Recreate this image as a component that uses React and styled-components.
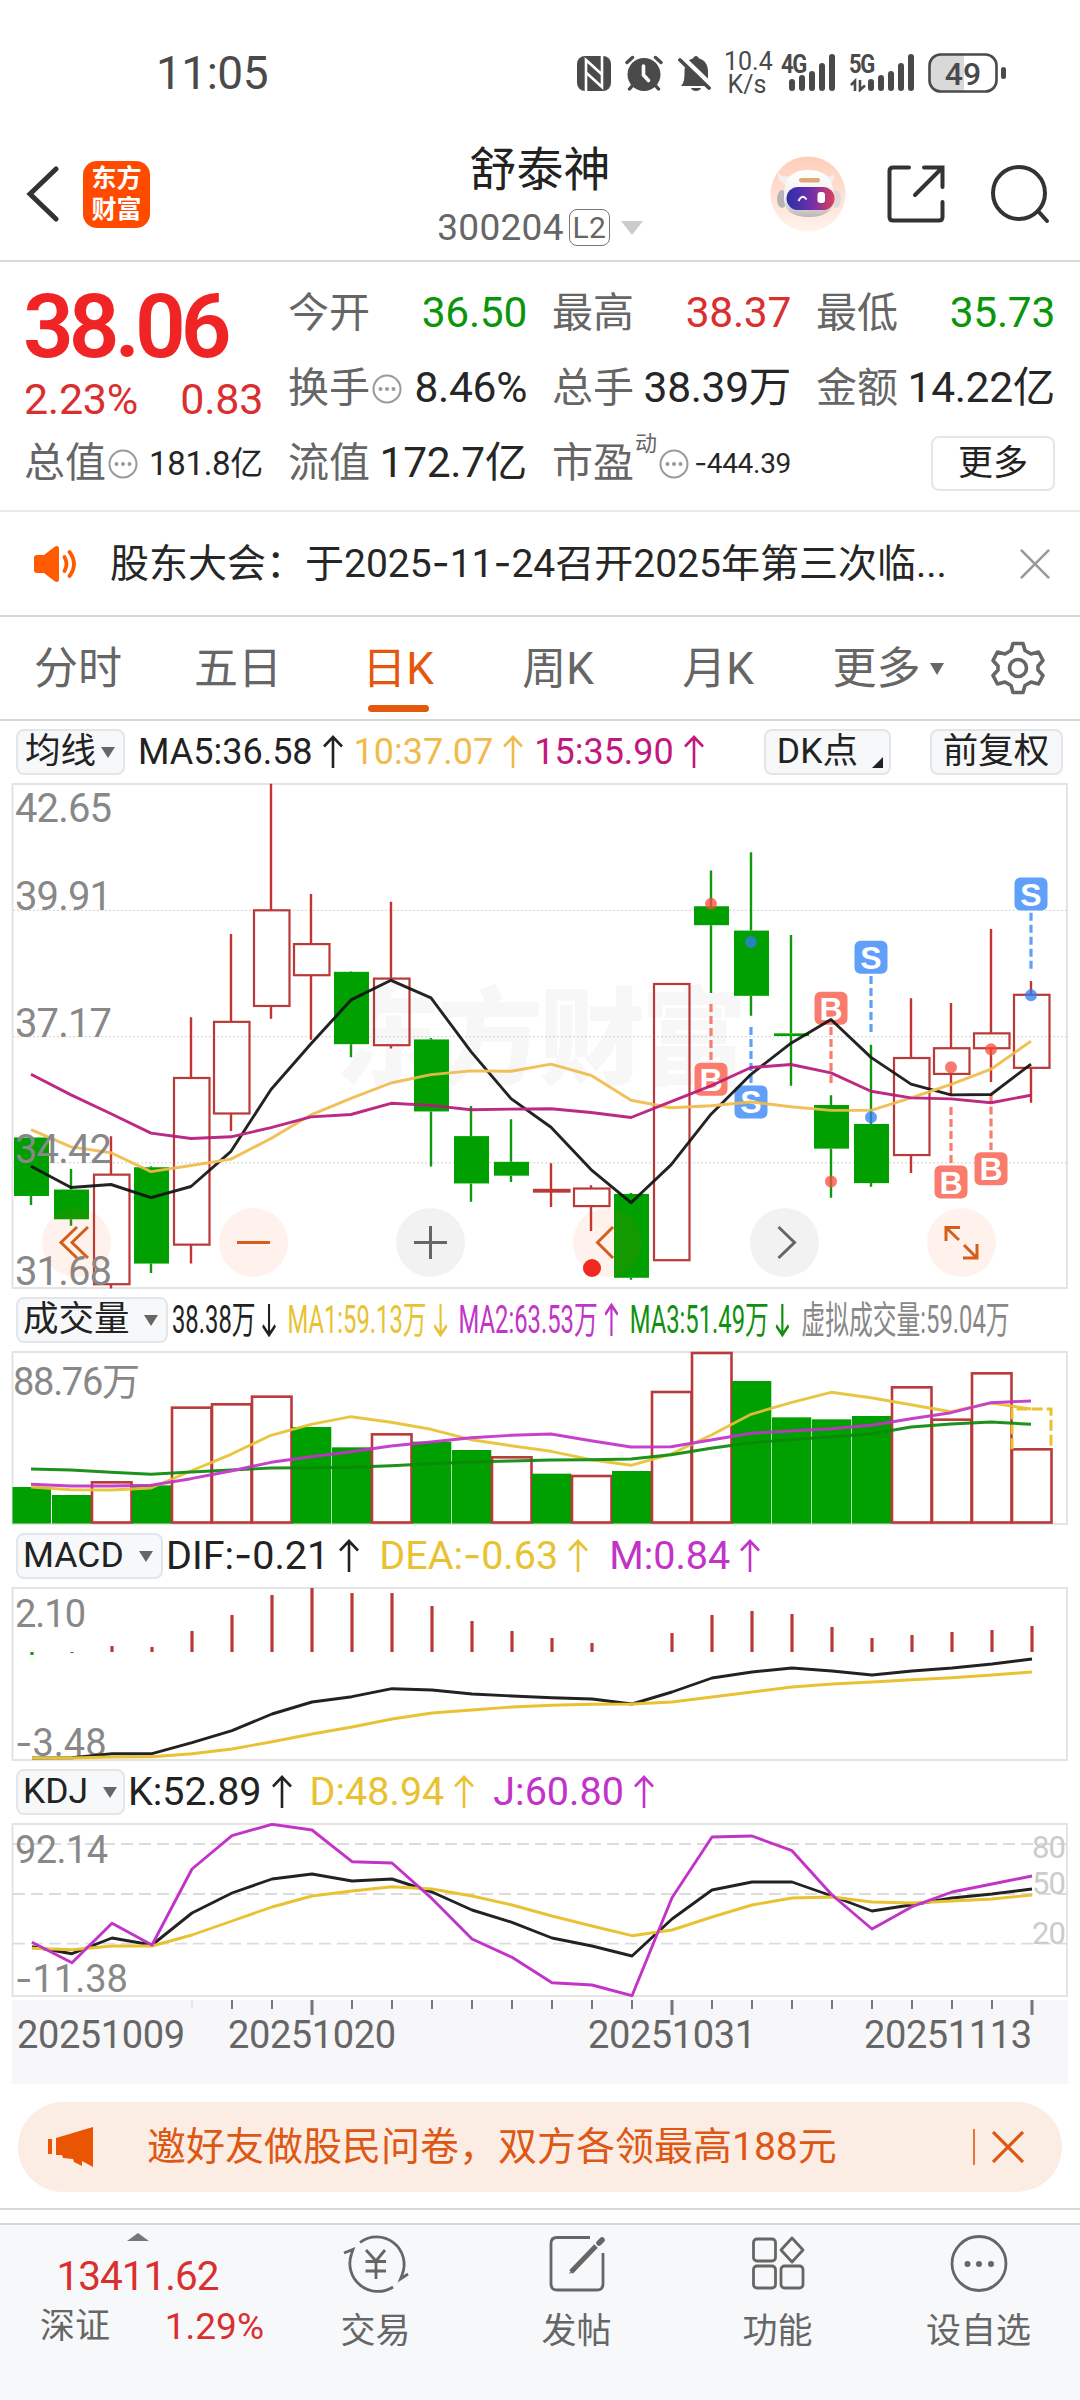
import React from 'react';
import styled, { createGlobalStyle } from 'styled-components';

const GlobalStyle = createGlobalStyle`
* {
    box-sizing: border-box;
}
body {
    margin: 0;
    background-color: #fff;
    font-family: Roboto, "Noto Sans CJK SC", sans-serif;
    color: #222;
}
`

const StyledPage = styled.div`
width: 1080px;
height: 2400px;
overflow: hidden;
background-color: #fff;
line-height: 1;
white-space: nowrap;
`

/* status bar */

const StyledStatusBar = styled.div`
display: flex;
align-items: center;
justify-content: space-between;
height: 114px;
padding: 32px 73px 0 156px;
color: #4a4a4a;
`

const StyledClock = styled.span`
font-size: 46px;
letter-spacing: -.5px;
`

const StyledStatusIcons = styled.div`
display: flex;
align-items: center;
`

const StyledSpeed = styled.div`
width: 46px;
margin: 0 11px 0 13px;
font-size: 25px;
line-height: 23px;
text-align: center;
`

const StyledSvg = styled.svg`
display: block;
flex-shrink: 0;
margin-left: ${props => props.$left || 0}px;
`

/* header */

const StyledHeader = styled.div`
display: grid;
grid-template-columns: 400px 1fr 400px;
height: 148px;
border-bottom: 2px solid #d8d8d8;
`

const StyledHeaderSide = styled.div`
display: flex;
align-items: center;
justify-content: ${props => props.$end ? 'flex-end' : 'flex-start'};
padding: 14px 30px 0 26px;
`

const StyledLogo = styled.div`
display: flex;
flex-direction: column;
align-items: center;
justify-content: center;
width: 67px;
height: 67px;
margin-left: 24px;
border-radius: 14px;
background-color: #ff4a00;
color: #fff;
font-size: 25px;
font-weight: 700;
line-height: 31px;
`

const StyledTitleBlock = styled.div`
display: flex;
flex-direction: column;
align-items: center;
padding-top: 32px;
`

const StyledTitle = styled.div`
font-size: 47px;
`

const StyledCode = styled.div`
display: flex;
align-items: center;
margin-top: 16px;
font-size: 37px;
letter-spacing: .3px;
color: #666;
`

const StyledLevel = styled.span`
display: flex;
align-items: center;
justify-content: center;
width: 41px;
height: 37px;
margin-left: 5px;
border: 1.5px solid #777;
border-radius: 8px;
font-size: 30px;
`

const StyledTriangle = styled.span`
width: 0;
height: 0;
margin-left: ${props => props.$left || 0}px;
border-left: ${props => props.$size || 7}px solid transparent;
border-right: ${props => props.$size || 7}px solid transparent;
border-top: ${props => props.$tall || 11}px solid ${props => props.$color || '#666'};
`

/* quote */

const StyledQuote = styled.div`
display: grid;
grid-template-columns: repeat(4, 239px);
grid-template-rows: repeat(3, 75px);
column-gap: 25px;
height: 250px;
padding: 14px 24px 0;
border-bottom: 2px solid #ebebeb;
`

const StyledPriceBlock = styled.div`
grid-row: span 2;
display: flex;
flex-direction: column;
justify-content: space-between;
padding: 6px 0 5px;
color: #d9302f;
`

const StyledPrice = styled.div`
color: #f02424;
font-size: 89px;
font-weight: 600;
letter-spacing: -5px;
margin-left: -1px;
`

const StyledChange = styled.div`
display: flex;
justify-content: space-between;
font-size: 43px;
letter-spacing: -.3px;
`

const StyledCell = styled.div`
display: flex;
align-items: center;
justify-content: space-between;
`

const StyledLabel = styled.span`
display: flex;
align-items: center;
font-size: 41px;
color: #666;
`

const StyledSup = styled.sup`
align-self: flex-start;
margin-top: -10px;
margin-left: 1px;
font-size: 22px;
line-height: 1;
`

const StyledValue = styled.span`
color: ${props => props.$color || '#262626'};
font-size: ${props => props.$size || 42.5}px;
letter-spacing: -.3px;
`

const StyledMore = styled.div`
justify-self: end;
align-self: center;
display: flex;
align-items: center;
justify-content: center;
width: 124px;
height: 55px;
border: 2px solid #e6e6e6;
border-radius: 8px;
font-size: 35px;
`

/* notice */

const StyledNotice = styled.div`
display: flex;
align-items: center;
height: 105px;
padding: 0 30px 0 33px;
border-bottom: 2px solid #d8d8d8;
font-size: 39px;
color: #262626;
`

const StyledNoticeText = styled.span`
flex: 1;
margin-left: 31px;
`

const StyledDash = styled.span`
font-family: Inter, sans-serif;
`

/* period tabs */

const StyledTabs = styled.div`
display: flex;
height: 104px;
border-bottom: 2px solid #d8d8d8;
`

const StyledTab = styled.div`
position: relative;
display: flex;
align-items: center;
justify-content: center;
width: 160px;
padding: 2px ${props => props.$shift ? 0 : 4}px 0 ${props => props.$shift || 0}px;
font-size: 44px;
color: ${props => props.$active ? '#e5570d' : '#666'};
`

const StyledUnderline = styled.span`
position: absolute;
left: 48px;
bottom: 7px;
width: 61px;
height: 7px;
border-radius: 4px;
background-color: #e5570d;
`

const StyledGearBox = styled.div`
display: flex;
align-items: center;
margin-left: 31px;
`

/* indicators */

const StyledIndicatorRow = styled.div`
display: flex;
align-items: center;
height: 62px;
padding: 0 16px;
font-size: ${props => props.$size || 39.5}px;
`

const StyledSelect = styled.div`
position: relative;
display: flex;
align-items: center;
width: ${props => props.$width}px;
height: 46px;
margin-left: ${props => props.$left || 0}px;
padding-left: ${props => props.$pad || 5}px;
border: 2px solid #e2e5ea;
border-radius: 8px;
background-color: #f7f8fa;
font-size: 35.5px;
flex-shrink: 0;
`

const StyledCorner = styled.span`
position: absolute;
right: 6px;
bottom: 5px;
border-left: 11px solid transparent;
border-bottom: 11px solid #222;
`

const StyledReading = styled.span`
display: flex;
align-items: center;
margin-left: ${props => props.$left}px;
color: ${props => props.$color};
`

const StyledNarrow = styled.div`
display: flex;
align-items: center;
margin-left: 4px;
font-size: 38px;
transform: scaleX(.626);
transform-origin: left center;
`

const StyledChartBox = styled.div`
position: relative;
`

const StyledChart = styled.svg`
display: block;
font-family: Roboto, "Noto Sans CJK SC", sans-serif;
`

const StyledControls = styled.div`
position: absolute;
left: 42px;
bottom: 12px;
display: flex;
gap: 108px;
`

const StyledControl = styled.div`
width: 69px;
height: 69px;
border-radius: 50%;
background-color: ${props => props.$muted ? 'rgba(0, 0, 0, .05)' : 'rgba(250, 90, 10, .08)'};
`

const StyledAxis = styled.div`
margin: 3px 12px 0;
height: 84px;
background-color: #f7f7fa;
`

/* banner and bottom bar */

const StyledBanner = styled.div`
display: flex;
align-items: center;
height: 90px;
margin: 18px 18px 16px;
padding: 0 38px 0 29px;
border-radius: 45px;
background-color: #fcede4;
font-size: 39px;
color: #dc5814;
`

const StyledBannerText = styled.span`
flex: 1;
margin-left: 53px;
`

const StyledDivider = styled.span`
width: 2px;
height: 36px;
margin-right: 17px;
background-color: #dc5814;
opacity: .8;
`

const StyledGap = styled.div`
height: 17px;
border-top: 2px solid #d6d7d9;
border-bottom: 2px solid #d6d7d9;
`

const StyledBottomBar = styled.div`
display: grid;
grid-template-columns: 275px repeat(4, 201px);
height: 175px;
background-color: #f7f8fa;
`

const StyledIndex = styled.div`
display: flex;
flex-direction: column;
align-items: center;
padding-top: 8px;
color: #d9302f;
`

const StyledUp = styled.span`
border-left: 11px solid transparent;
border-right: 11px solid transparent;
border-bottom: 8px solid #777;
`

const StyledIndexValue = styled.div`
margin-top: 15px;
font-size: 40.5px;
letter-spacing: -1px;
`

const StyledIndexRow = styled.div`
display: flex;
justify-content: space-between;
align-items: center;
width: 224px;
margin: 11px 0 0 29px;
font-size: 37px;
`

const StyledIndexName = styled.span`
font-size: 35px;
color: #666;
`

const StyledAction = styled.div`
display: flex;
flex-direction: column;
align-items: center;
padding-top: 7px;
font-size: 35px;
color: #666;
`

const StyledActionName = styled.span`
margin-top: 18px;
`

const RED = '#b93a38'
const GREEN = '#00a000'
const YELLOW = '#e8c232'
const PURPLE = '#c233c8'

const x = (i) => 31 + 40 * i

// [high, body top, body bottom, low, rising]
const candles = [
    [1087, 1087, 1260, 1287, 0],
    [1180, 1241, 1329, 1348, 0],
    [1083, 1197, 1521, 1534, 1],
    [1172, 1175, 1460, 1488, 0],
    [731, 911, 1404, 1460, 1],
    [485, 745, 1016, 1068, 1],
    [41, 415, 698, 736, 1],
    [367, 515, 607, 798, 1],
    [595, 597, 811, 850, 0],
    [390, 617, 814, 824, 1],
    [793, 797, 1010, 1173, 0],
    [994, 1083, 1223, 1277, 0],
    [1033, 1159, 1200, 1219, 0],
    [1163, 1242, 1247, 1293, 1],
    [1228, 1238, 1290, 1364, 1],
    [1251, 1254, 1502, 1508, 0],
    [633, 633, 1450, 1450, 1],
    [297, 403, 459, 660, 0],
    [243, 475, 668, 727, 0],
    [488, 779, 787, 934, 0],
    [962, 991, 1120, 1265, 0],
    [813, 1047, 1222, 1233, 0],
    [675, 852, 1139, 1192, 1],
    [689, 823, 899, 960, 1],
    [470, 779, 823, 923, 1],
    [624, 665, 881, 984, 1],
]

const ma5 = [1172, 1235, 1226, 1265, 1232, 1128, 945, 810, 680, 622, 674, 833, 972, 1057, 1182, 1280, 1168, 1018, 900, 808, 738, 850, 929, 961, 960, 870]
const ma10 = [1064, 1115, 1132, 1188, 1170, 1151, 1090, 1020, 971, 926, 901, 890, 891, 870, 903, 977, 999, 993, 982, 996, 1007, 1007, 970, 930, 885, 802]
const ma15 = [900, 961, 1017, 1074, 1090, 1085, 1058, 1026, 1019, 986, 992, 1005, 1003, 1002, 1013, 1028, 981, 934, 880, 871, 896, 950, 970, 973, 984, 962]

// [index, letter, badge top, dash start, dash end, dot]
const signals = [
    [17, 'B', 866, 692, 858, 396],
    [18, 'S', 933, 760, 926, 509],
    [20, 'B', 656, 760, 926, 1217],
    [21, 'S', 505, 609, 776, 1027],
    [23, 'B', 1170, 997, 1163, 879],
    [24, 'B', 1131, 960, 1124, 826],
    [25, 'S', 318, 422, 589, 666],
]

const volumes = [591, 615, 577, 586, 353, 343, 320, 411, 472, 433, 455, 480, 502, 551, 558, 543, 306, 189, 273, 382, 388, 378, 292, 389, 250, 478]
const volumeRising = [2, 4, 5, 6, 9, 12, 14, 16, 17, 22, 23, 24, 25]
const vol1 = [591, 599, 600, 594, 543, 493, 436, 403, 380, 397, 418, 449, 467, 484, 509, 526, 492, 436, 373, 338, 307, 323, 344, 365, 339, 357]
const vol2 = [583, 588, 588, 586, 566, 543, 517, 500, 485, 468, 456, 443, 436, 432, 452, 471, 470, 450, 430, 423, 416, 406, 386, 368, 338, 333]
const vol3 = [537, 540, 547, 553, 546, 540, 534, 533, 532, 527, 521, 516, 513, 510, 509, 507, 494, 475, 458, 449, 440, 432, 411, 402, 396, 403]

const macd = [1095, 1089, 1068, 1071, 1023, 975, 915, 894, 909, 909, 948, 993, 1023, 1044, 1059, 1086, 1029, 975, 963, 972, 1011, 1044, 1035, 1026, 1020, 1008]
const dif = [1404, 1403, 1391, 1391, 1358, 1322, 1272, 1236, 1220, 1196, 1200, 1212, 1218, 1223, 1227, 1242, 1206, 1164, 1146, 1134, 1143, 1155, 1143, 1134, 1122, 1107]
const dea = [1404, 1404, 1401, 1400, 1391, 1377, 1355, 1332, 1311, 1287, 1269, 1260, 1251, 1246, 1243, 1242, 1236, 1221, 1206, 1191, 1182, 1176, 1169, 1163, 1155, 1146]

const kLine = [560, 581, 534, 555, 459, 399, 357, 342, 363, 357, 396, 450, 487, 534, 558, 588, 477, 390, 366, 366, 408, 453, 434, 414, 402, 387]
const dLine = [565, 569, 558, 558, 525, 483, 441, 408, 393, 380, 387, 408, 435, 468, 498, 527, 510, 471, 435, 414, 411, 426, 429, 423, 417, 405]
const jLine = [547, 608, 490, 555, 327, 227, 193, 210, 305, 309, 416, 537, 592, 668, 675, 707, 413, 231, 228, 272, 405, 507, 440, 396, 372, 348]

const priceY = (v) => 770 + v / 2.958
const volumeY = (v) => 1290 + v / 3
const kdjY = (v) => 1760 + v / 3

const Line = ({ data, y, color, dx = 0 }) => (
    <polyline
        points={data.map((v, i) => `${x(i) + dx},${y(v).toFixed(1)}`).join(' ')}
        fill="none" stroke={color} strokeWidth="2.9" strokeLinejoin="round"
    />
)

const Frame = ({ top, bottom }) => (
    <rect x="12.5" y={top} width="1054.5" height={bottom - top} fill="none" stroke="#e2e2e2" strokeWidth="1.8" />
)

const ScaleText = ({ left = 15, y, width, size = 40, color = '#888', children }) => (
    <text x={left} y={y} fontSize={size} fill={color} textLength={width}>{children}</text>
)

const Arrow = ({ down, left = 10, width = 20, stroke = 2.6 }) => (
    <StyledSvg $left={left} width={width} height="34" viewBox={`0 0 ${width} 34`} fill="none" stroke="currentColor" strokeWidth={stroke}>
        <path d={down
            ? `M${width / 2} 1V32M1 22.5L${width / 2} 32L${width - 1} 22.5`
            : `M${width / 2} 33V2M1 11.5L${width / 2} 2L${width - 1} 11.5`} />
    </StyledSvg>
)

const Dots = () => (
    <StyledSvg $left={2} width="30" height="30" viewBox="0 0 30 30" fill="none" stroke="#999" strokeWidth="2">
        <circle cx="15" cy="15" r="13.5" />
        <g fill="#999" stroke="none">
            <circle cx="8.5" cy="15" r="2" />
            <circle cx="15" cy="15" r="2" />
            <circle cx="21.5" cy="15" r="2" />
        </g>
    </StyledSvg>
)

const Cross = ({ size, color, stroke }) => (
    <StyledSvg width={size} height={size} viewBox="0 0 32 32" stroke={color} strokeWidth={stroke}>
        <path d="M1 1L31 31M31 1L1 31" />
    </StyledSvg>
)

const Bars = ({ tops, left }) => (
    <StyledSvg $left={left} width="46" height="38" viewBox="0 0 46 38" stroke="#4a4a4a" strokeWidth="6" strokeLinecap="round">
        {tops.map((t, i) => <path key={i} d={`M${3 + i * 10} ${t + 3}V34`} />)}
    </StyledSvg>
)

const StyledNetwork = styled.div`
display: flex;
position: relative;
`

const StyledNetworkName = styled.span`
position: absolute;
left: ${props => props.$x || 0}px;
top: -2px;
font-size: 25px;
font-weight: 700;
letter-spacing: -1.5px;
transform: scaleX(.88);
transform-origin: left;
`

class StatusBar extends React.Component {
    render() {
        return (
            <StyledStatusBar>
                <StyledClock>11:05</StyledClock>
                <StyledStatusIcons>
                    <StyledSvg width="34" height="35" viewBox="0 0 34 35">
                        <rect width="34" height="35" rx="8" fill="#4a4a4a" />
                        <path d="M9 35V4L25 18.500M25 0V31L9 16.500" stroke="#fff" strokeWidth="2.600" fill="none" />
                    </StyledSvg>
                    <StyledSvg $left={14} width="38" height="36" viewBox="0 0 38 36" stroke="#4a4a4a" strokeLinecap="round" fill="none">
                        <circle cx="19" cy="19.500" r="16.500" fill="#4a4a4a" stroke="none" />
                        <path d="M2 7.500L7.500 2.500M36 7.500L30.500 2.500M8 30L4.500 34M30 30L33.500 34" strokeWidth="3.400" />
                        <path d="M18.500 11V20L23.500 25.500" stroke="#fff" strokeWidth="3.600" />
                    </StyledSvg>
                    <StyledSvg $left={15} width="33" height="36" viewBox="0 0 33 36">
                        <path d="M3 31C6 28 6.500 24 6.500 17C6.500 9 10 4.500 15 3.500C16 0 20 0 21 3.500C27 5 30 10 30 17V24L33 31Z" fill="#4a4a4a" />
                        <path d="M13 33H23C22 37 14 37 13 33Z" fill="#4a4a4a" />
                        <path d="M3 1L35 32" stroke="#fff" strokeWidth="5" />
                        <path d="M2 5L31 33" stroke="#4a4a4a" strokeWidth="3.800" strokeLinecap="round" />
                    </StyledSvg>
                    <StyledSpeed>10.4<br />K/s</StyledSpeed>
                    <StyledNetwork>
                        <StyledNetworkName>4G</StyledNetworkName>
                        <Bars left={8} tops={[25, 21, 17, 9, 0]} />
                    </StyledNetwork>
                    <StyledNetwork>
                        <StyledNetworkName $x={14}>5G</StyledNetworkName>
                        <StyledSvg $left={15} width="17" height="38" viewBox="0 0 17 38" stroke="#4a4a4a" strokeWidth="2.600" fill="none">
                            <path d="M5 37V27L1 31M10 26V36L15 31.500" />
                        </StyledSvg>
                        <Bars left={1} tops={[25, 21, 17, 9, 0]} />
                    </StyledNetwork>
                    <StyledSvg $left={14} width="79" height="40" viewBox="0 0 79 40">
                        <path d="M12 2H36V38H12Q2 38 2 28V12Q2 2 12 2Z" fill="#d9d9d9" />
                        <rect x="1.500" y="1.500" width="67" height="37" rx="11" fill="none" stroke="#4a4a4a" strokeWidth="2.600" />
                        <rect x="73" y="14" width="5" height="12" rx="2.500" fill="#4a4a4a" />
                        <text x="35" y="31.500" textAnchor="middle" fontSize="32" fontWeight="500" fill="#4a4a4a">49</text>
                    </StyledSvg>
                </StyledStatusIcons>
            </StyledStatusBar>
        )
    }
}

const Robot = () => (
    <StyledSvg width="76" height="76" viewBox="0 0 76 76">
        <defs>
            <linearGradient id="halo" x1="0" y1="0" x2="0" y2="1">
                <stop offset="0" stopColor="#ffcdb8" />
                <stop offset="1" stopColor="#fff3ec" />
            </linearGradient>
            <linearGradient id="shell" x1="0" y1="0" x2="0" y2="1">
                <stop offset="0" stopColor="#fff" />
                <stop offset=".6" stopColor="#f1efee" />
                <stop offset="1" stopColor="#bdb6b6" />
            </linearGradient>
            <linearGradient id="visor">
                <stop offset="0" stopColor="#2b2fa8" />
                <stop offset=".55" stopColor="#7430a8" />
                <stop offset="1" stopColor="#e0405a" />
            </linearGradient>
        </defs>
        <circle cx="38" cy="38" r="37.500" fill="url(#halo)" />
        <path d="M8 16Q7 27 17 29L20 20Q11 22 8 16ZM64 16Q66 27 58 29L55 20Q62 22 64 16Z" fill="#f4efed" />
        <ellipse cx="12" cy="43" rx="5" ry="9" fill="#b8b3b8" />
        <ellipse cx="66" cy="43" rx="5" ry="9" fill="#e0d8d8" />
        <path d="M14 40C14 22 22 14 38 14C55 14 63 22 64 40C65 54 56 61 39 61C22 61 13 54 14 40Z" fill="url(#shell)" />
        <rect x="29" y="22" width="21" height="4.500" rx="2.200" fill="#dfa878" />
        <rect x="16.500" y="31" width="48" height="23" rx="11.500" fill="url(#visor)" />
        <path d="M28.500 45Q32 37.500 36.500 43.500" stroke="#fff" strokeWidth="2" fill="none" />
        <rect x="47.500" y="36" width="7.500" height="11" rx="3" fill="#fff" />
    </StyledSvg>
)

class Header extends React.Component {
    render() {
        return (
            <StyledHeader>
                <StyledHeaderSide>
                    <StyledSvg width="33" height="56" viewBox="0 0 33 56" fill="none" stroke="#333" strokeWidth="5" strokeLinecap="round">
                        <path d="M30 3L4 28L30 53" />
                    </StyledSvg>
                    <StyledLogo><span>东方</span><span>财富</span></StyledLogo>
                </StyledHeaderSide>
                <StyledTitleBlock>
                    <StyledTitle>舒泰神</StyledTitle>
                    <StyledCode>
                        300204
                        <StyledLevel>L2</StyledLevel>
                        <StyledTriangle $left={11} $size={11} $tall={14} $color="#ccc" />
                    </StyledCode>
                </StyledTitleBlock>
                <StyledHeaderSide $end>
                    <Robot />
                    <StyledSvg $left={41} width="58" height="58" viewBox="0 0 58 58" fill="none" stroke="#333" strokeWidth="4" strokeLinecap="round">
                        <path d="M22 2.500H6Q2.500 2.500 2.500 6V52Q2.500 55.500 6 55.500H52Q55.500 55.500 55.500 52V37" />
                        <path d="M37 2.500H55.500V22M54 4L28 30" />
                    </StyledSvg>
                    <StyledSvg $left={44} width="61" height="60" viewBox="0 0 61 60" fill="none" stroke="#333" strokeWidth="4" strokeLinecap="round">
                        <circle cx="30" cy="29" r="26" />
                        <path d="M49 47L58 57" />
                    </StyledSvg>
                </StyledHeaderSide>
            </StyledHeader>
        )
    }
}

const Cell = ({ label, sup, dots, value, color, size }) => (
    <StyledCell>
        <StyledLabel>{label}{sup && <StyledSup>{sup}</StyledSup>}{dots && <Dots />}</StyledLabel>
        <StyledValue $color={color} $size={size}>{value}</StyledValue>
    </StyledCell>
)

class Quote extends React.Component {
    render() {
        return (
            <StyledQuote>
                <StyledPriceBlock>
                    <StyledPrice>38.06</StyledPrice>
                    <StyledChange><span>2.23%</span><span>0.83</span></StyledChange>
                </StyledPriceBlock>
                <Cell label="今开" value="36.50" color="#0a960a" />
                <Cell label="最高" value="38.37" color="#d9302f" />
                <Cell label="最低" value="35.73" color="#0a960a" />
                <Cell label="换手" dots value="8.46%" />
                <Cell label="总手" value="38.39万" />
                <Cell label="金额" value="14.22亿" />
                <Cell label="总值" dots value="181.8亿" size={33} />
                <Cell label="流值" value="172.7亿" />
                <Cell label="市盈" sup="动" dots size={28} value={<><StyledDash>-</StyledDash>444.39</>} />
                <StyledMore>更多</StyledMore>
            </StyledQuote>
        )
    }
}

const Notice = () => (
    <StyledNotice>
        <StyledSvg width="46" height="38" viewBox="0 0 46 38" fill="none" stroke="#ff5a00" strokeLinecap="round">
            <path d="M4 10H11L22 1.500Q26 0 26 4V34Q26 38 22 36.500L11 28H4Q1 28 1 25V13Q1 10 4 10Z" fill="#ff5a00" stroke="none" />
            <path d="M31.500 12Q35.500 19 31.500 26M36.500 7Q45.500 19 36.500 31" strokeWidth="3.800" />
        </StyledSvg>
        <StyledNoticeText>
            股东大会：于2025<StyledDash>-</StyledDash>11<StyledDash>-</StyledDash>24召开2025年第三次临...
        </StyledNoticeText>
        <Cross size={30} color="#999" stroke={2.8} />
    </StyledNotice>
)

const Tabs = () => (
    <StyledTabs>
        <StyledTab>分时</StyledTab>
        <StyledTab>五日</StyledTab>
        <StyledTab $active>日K<StyledUnderline /></StyledTab>
        <StyledTab>周K</StyledTab>
        <StyledTab>月K</StyledTab>
        <StyledTab $shift={16}>更多<StyledTriangle $left={9} $tall={12} /></StyledTab>
        <StyledGearBox>
            <StyledSvg width="54" height="54" viewBox="0 0 54 54" fill="none" stroke="#666" strokeWidth="3.600" strokeLinejoin="round">
                <path d="M22 2.500H32L34 9.500L40 13L47.500 11L52 19.500L47 25V29L52 34.500L47.500 43L40 41L34 44.500L32 51.500H22L20 44.500L14 41L6.500 43L2 34.500L7 29V25L2 19.500L6.500 11L14 13L20 9.500Z" />
                <circle cx="27" cy="27" r="8.500" />
            </StyledSvg>
        </StyledGearBox>
    </StyledTabs>
)

const PriceChart = () => (
    <StyledChartBox>
        <StyledChart width="1080" height="506" viewBox="0 783 1080 506">
            <text x="335" y="1076" fontSize="106" fontWeight="900" fill="#f7f7f7" textLength="412">东方财富</text>
            <Frame top={784} bottom={1288} />
            {[415, 789, 1162].map(v => (
                <path key={v} d={`M13 ${priceY(v)}H1067`} stroke="#cfcfcf" strokeWidth="1" strokeDasharray="2 2" />
            ))}
            {candles.map(([high, top, bottom, low, rising], i) => (
                <g key={i}>
                    <path d={`M${x(i)} ${priceY(high)}V${priceY(top)}M${x(i)} ${priceY(bottom)}V${priceY(low)}`} stroke={rising ? '#c23532' : '#109810'} strokeWidth="2.400" />
                    {rising
                        ? <rect x={x(i) - 17} y={priceY(top)} width="35.500" height={priceY(bottom) - priceY(top)} fill="none" stroke={RED} strokeWidth="2.200" />
                        : <rect x={x(i) - 17} y={priceY(top)} width="35" height={priceY(bottom) - priceY(top)} fill={GREEN} />}
                </g>
            ))}
            {signals.map(([i, letter, top, from, to]) => {
                const color = letter === 'B' ? '#f97c6c' : '#61a0f8'
                return (
                    <g key={i}>
                        <path d={`M${x(i)} ${priceY(from)}V${priceY(to)}`} stroke={color} strokeWidth="3.200" strokeDasharray="8 4" />
                        <rect x={x(i) - 16.5} y={priceY(top)} width="33" height="33" rx="6" fill={color} />
                        <text x={x(i)} y={priceY(top) + 28} fontSize="32" fontWeight="700" fill="#fff" textAnchor="middle" fontFamily="Liberation Sans, sans-serif">{letter}</text>
                    </g>
                )
            })}
            <g opacity=".92">
                <Line data={ma5} y={priceY} color="#111" />
                <Line data={ma10} y={priceY} color="#f0bb4c" />
                <Line data={ma15} y={priceY} color="#b8187a" />
            </g>
            {signals.map(([i, letter, , , , dot]) => (
                <circle key={i} cx={x(i)} cy={priceY(dot)} r="6" fill={letter === 'B' ? '#fb4a3c' : '#2f7df0'} opacity=".75" />
            ))}
            <ScaleText y={822} width={97}>42.65</ScaleText>
            <ScaleText y={910} width={97}>39.91</ScaleText>
            <ScaleText y={1037} width={97}>37.17</ScaleText>
            <ScaleText y={1163} width={97}>34.42</ScaleText>
            <ScaleText y={1285} width={97}>31.68</ScaleText>
            <circle cx="592" cy="1268" r="9" fill="#f02723" />
        </StyledChart>
        <StyledControls>
            {[
                ['M35 19L19 34.500L35 50M46 19L30 34.500L46 50', false],
                ['M18 34.500H51', false],
                ['M18 34.500H51M34.500 18V51', true],
                ['M40 19L24.500 34.500L40 50', false],
                ['M28.500 19L44.500 34.500L28.500 50', true],
                ['M19 33V19.500H33M19 19.500L32 32M50 36V50H36M50 50L37 37', false],
            ].map(([d, muted]) => (
                <StyledControl key={d} $muted={muted}>
                    <svg width="69" height="69" viewBox="0 0 69 69" fill="none" stroke={muted ? '#666' : '#d45f1c'} strokeWidth="3">
                        <path d={d} />
                    </svg>
                </StyledControl>
            ))}
        </StyledControls>
    </StyledChartBox>
)

const VolumeChart = () => (
    <StyledChart width="1080" height="174" viewBox="0 1351 1080 174">
        <Frame top={1352} bottom={1524} />
        {volumes.map((v, i) => volumeRising.includes(i)
            ? <rect key={i} x={x(i) - 19} y={volumeY(v)} width="39.500" height={1522.5 - volumeY(v)} fill="none" stroke={RED} strokeWidth="2.600" />
            : <rect key={i} x={i ? x(i) - 19 : 12.5} y={volumeY(v)} width={i ? 39.3 : 38.5} height={1523.5 - volumeY(v)} fill={GREEN} />
        )}
        <path d={`M1012 ${volumeY(478)}V1409H1051V${volumeY(478)}`} fill="none" stroke="#ecc02c" strokeWidth="3" strokeDasharray="11 4" />
        <g opacity=".92">
            <Line data={vol1} y={volumeY} color={YELLOW} />
            <Line data={vol3} y={volumeY} color="#0a8a0a" />
            <Line data={vol2} y={volumeY} color={PURPLE} />
        </g>
        <ScaleText left={13} y={1395} width={127} size={38}>88.76万</ScaleText>
    </StyledChart>
)

const MacdChart = () => (
    <StyledChart width="1080" height="174" viewBox="0 1587 1080 174">
        <Frame top={1588} bottom={1760} />
        {macd.map((v, i) => (
            <path key={i} d={`M${x(i) + 1} 1652V${volumeY(v)}`} stroke={v > 1086 ? '#109810' : RED} strokeWidth="3.200" />
        ))}
        <ScaleText y={1627} width={71} size={38}>2.10</ScaleText>
        <text x="15" y="1756" fontSize="38" fill="#888"><tspan fontFamily="Inter">-</tspan>3.48</text>
        <Line data={dif} y={volumeY} color="#222" dx={1} />
        <Line data={dea} y={volumeY} color={YELLOW} dx={1} />
    </StyledChart>
)

const KdjChart = () => (
    <StyledChart width="1080" height="174" viewBox="0 1823 1080 174">
        <Frame top={1824} bottom={1996} />
        {[252, 402, 551].map(v => (
            <path key={v} d={`M13 ${kdjY(v)}H1067`} stroke="#dcdcdc" strokeWidth="1.800" strokeDasharray="12 6" />
        ))}
        <ScaleText y={1863} width={93} size={38}>92.14</ScaleText>
        <text x="15" y="1992" fontSize="38" fill="#888"><tspan fontFamily="Inter">-</tspan>11.38</text>
        <ScaleText left={1032} y={1858} width={34} size={31} color="#ccc">80</ScaleText>
        <ScaleText left={1032} y={1894} width={34} size={31} color="#ccc">50</ScaleText>
        <ScaleText left={1032} y={1944} width={34} size={31} color="#ccc">20</ScaleText>
        <Line data={kLine} y={kdjY} color="#222" dx={1} />
        <Line data={dLine} y={kdjY} color={YELLOW} dx={1} />
        <Line data={jLine} y={kdjY} color={PURPLE} dx={1} />
    </StyledChart>
)

const DateAxis = () => (
    <StyledAxis>
        <StyledChart width="1056" height="84" viewBox="12 2000 1056 84">
            {candles.map((c, i) => {
                const major = i === 7 || i === 16 || i === 25
                return i > 3 && (
                    <path key={i} d={`M${x(i) + 1} 2000V${major ? 2015 : 2009}`} stroke={i === 4 ? '#e6e6e6' : '#777'} strokeWidth={major ? 3 : 2} />
                )
            })}
            <ScaleText left={17} y={2048} width={168} size={38} color="#666">20251009</ScaleText>
            <ScaleText left={228} y={2048} width={168} size={38} color="#666">20251020</ScaleText>
            <ScaleText left={588} y={2048} width={168} size={38} color="#666">20251031</ScaleText>
            <ScaleText left={864} y={2048} width={168} size={38} color="#666">20251113</ScaleText>
        </StyledChart>
    </StyledAxis>
)

const Reading = ({ children, color = '#222', left, down, arrow = 10, width, stroke }) => (
    <StyledReading $color={color} $left={left}>
        <span>{children}</span>
        <Arrow down={down} left={arrow} width={width} stroke={stroke} />
    </StyledReading>
)

const BottomBar = () => (
    <StyledBottomBar>
        <StyledIndex>
            <StyledUp />
            <StyledIndexValue>13411.62</StyledIndexValue>
            <StyledIndexRow><StyledIndexName>深证</StyledIndexName><span>1.29%</span></StyledIndexRow>
        </StyledIndex>
        <StyledAction>
            <StyledSvg width="68" height="64" viewBox="0 0 68 64" fill="none" stroke="#666" strokeWidth="2.800">
                <path d="M18 10.500A27.500 27.500 0 0 1 60 43L58.500 47L66 42" />
                <path d="M51 55A28 28 0 0 1 9.500 22L11 17.500L2 21" />
                <path d="M24 18L34 29L43 18M23.500 29.500H44M23.500 39H44M34 29V47" />
            </StyledSvg>
            <StyledActionName>交易</StyledActionName>
        </StyledAction>
        <StyledAction>
            <StyledSvg width="56" height="64" viewBox="0 0 56 64" fill="none" stroke="#666" strokeWidth="2.800">
                <path d="M41 5.500H8Q2 5.500 2 11.500V52Q2 58 8 58H48Q54 58 54 52V21" />
                <path d="M47 14L22 40" strokeWidth="5" />
                <path d="M50 11L53 8" strokeWidth="5.500" strokeLinecap="round" />
                <path d="M24.500 35L20 42L27 38.500Z" fill="#666" stroke="none" />
            </StyledSvg>
            <StyledActionName>发帖</StyledActionName>
        </StyledAction>
        <StyledAction>
            <StyledSvg width="54" height="64" viewBox="0 0 54 64" fill="none" stroke="#666" strokeWidth="2.800" strokeLinejoin="round">
                <rect x="2.500" y="7" width="22" height="22" rx="3.500" />
                <rect x="2.500" y="34" width="22" height="22" rx="3.500" />
                <rect x="30" y="34" width="22" height="22" rx="3.500" />
                <path d="M41 6L52 18L41 30L30 18Z" />
            </StyledSvg>
            <StyledActionName>功能</StyledActionName>
        </StyledAction>
        <StyledAction>
            <StyledSvg width="58" height="64" viewBox="0 0 58 64" fill="none" stroke="#666" strokeWidth="2.800">
                <circle cx="29" cy="31.500" r="27" />
                <g fill="#666" stroke="none">
                    <circle cx="17.500" cy="32" r="3" />
                    <circle cx="29" cy="32" r="3" />
                    <circle cx="41" cy="32" r="3" />
                </g>
            </StyledSvg>
            <StyledActionName>设自选</StyledActionName>
        </StyledAction>
    </StyledBottomBar>
)

class App extends React.Component {
    render() {
        return (
            <StyledPage>
                <GlobalStyle />
                <StatusBar />
                <Header />
                <Quote />
                <Notice />
                <Tabs />
                <StyledIndicatorRow $size={36}>
                    <StyledSelect $width={109} $pad={7}>均线<StyledTriangle $left={5} /></StyledSelect>
                    <Reading left={13}>MA5:36.58</Reading>
                    <Reading left={11} color="#f0bb4c">10:37.07</Reading>
                    <Reading left={11} color="#c2187e">15:35.90</Reading>
                    <StyledSelect $width={127} $left={60} $pad={11}>DK点<StyledCorner /></StyledSelect>
                    <StyledSelect $width={133} $left={39} $pad={11}>前复权</StyledSelect>
                </StyledIndicatorRow>
                <PriceChart />
                <StyledIndicatorRow>
                    <StyledSelect $width={152}>成交量<StyledTriangle $left={14} /></StyledSelect>
                    <StyledNarrow>
                        <Reading left={0} arrow={11} width={22} stroke={3.4} down>38.38万</Reading>
                        <Reading left={18} arrow={11} width={22} stroke={3.4} down color={YELLOW}>MA1:59.13万</Reading>
                        <Reading left={18} arrow={11} width={22} stroke={3.4} color={PURPLE}>MA2:63.53万</Reading>
                        <Reading left={18} arrow={11} width={22} stroke={3.4} down color="#109010">MA3:51.49万</Reading>
                        <StyledReading $left={19} $color="#888">虚拟成交量:59.04万</StyledReading>
                    </StyledNarrow>
                </StyledIndicatorRow>
                <VolumeChart />
                <StyledIndicatorRow>
                    <StyledSelect $width={147}>MACD<StyledTriangle $left={15} /></StyledSelect>
                    <Reading left={3}>DIF:<StyledDash>-</StyledDash>0.21</Reading>
                    <Reading left={20} color={YELLOW}>DEA:<StyledDash>-</StyledDash>0.63</Reading>
                    <Reading left={21} color={PURPLE}>M:0.84</Reading>
                </StyledIndicatorRow>
                <MacdChart />
                <StyledIndicatorRow>
                    <StyledSelect $width={109}>KDJ<StyledTriangle $left={15} /></StyledSelect>
                    <Reading left={3}>K:52.89</Reading>
                    <Reading left={18} color={YELLOW}>D:48.94</Reading>
                    <Reading left={19} color={PURPLE}>J:60.80</Reading>
                </StyledIndicatorRow>
                <KdjChart />
                <DateAxis />
                <StyledBanner>
                    <StyledSvg width="47" height="42" viewBox="0 0 47 42" fill="#ea5504">
                        <path d="M1 13H5V28H1ZM9 12L46 1V41L35 35V40L27 36L26 33L16 32L15 29H9Z" />
                    </StyledSvg>
                    <StyledBannerText>邀好友做股民问卷，双方各领最高188元</StyledBannerText>
                    <StyledDivider />
                    <Cross size={32} color="#dc5814" stroke={3.2} />
                </StyledBanner>
                <StyledGap />
                <BottomBar />
            </StyledPage>
        )
    }
}

export default App;
